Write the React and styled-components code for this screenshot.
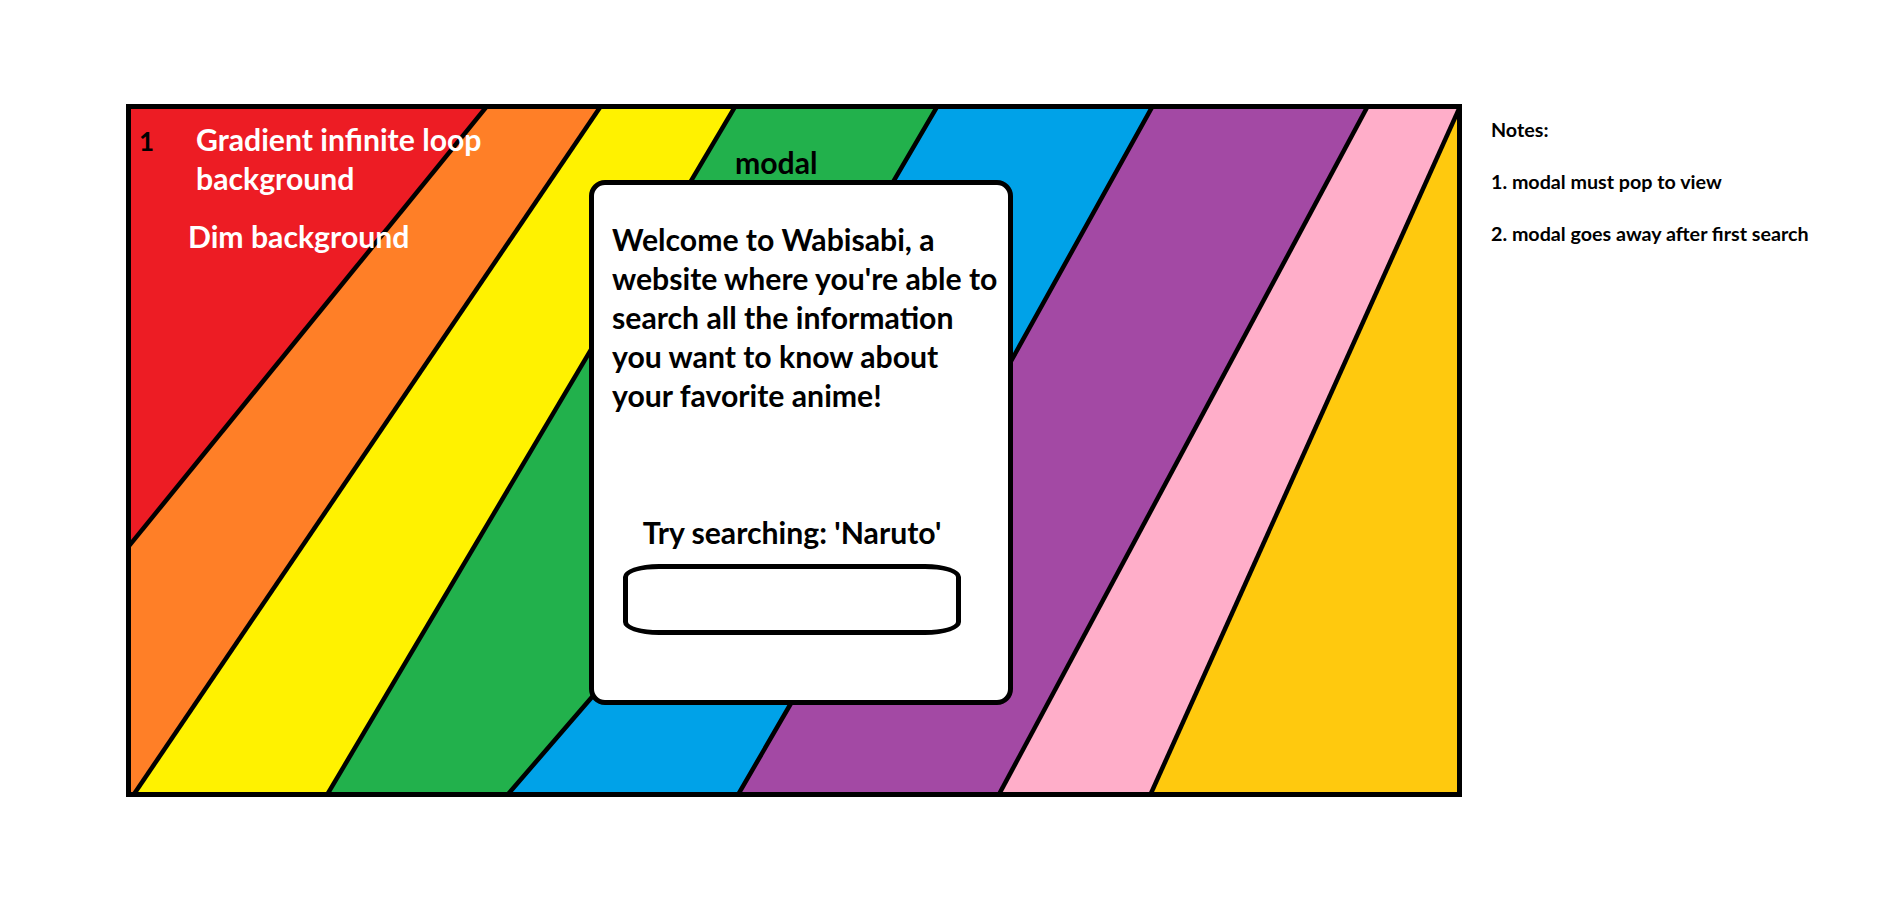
import React from "react";
import styled, { createGlobalStyle } from "styled-components";

const GlobalStyle = createGlobalStyle`
  html, body { margin: 0; padding: 0; background: #ffffff; }
  body { font-family: Lato, "Open Sans", "Liberation Sans", sans-serif; }
  * { box-sizing: border-box; }
`;

const Page = styled.div`
  display: flex;
  align-items: flex-start;
  gap: 29px;
  padding: 104px 0 0 126px;
  width: 1883px;
  height: 904px;
  overflow: hidden;
`;

const Frame = styled.div`
  flex-shrink: 0;
  width: 1336px;
  height: 693px;
  border: 5px solid #000;
  display: grid;
  overflow: hidden;
`;

const Stripes = styled.svg`
  grid-area: 1 / 1;
  display: block;
  width: 1326px;
  height: 683px;
`;

const Content = styled.div`
  grid-area: 1 / 1;
  position: relative;
  z-index: 1;
  display: grid;
  grid-template-columns: 458px 424px;
  align-items: start;
`;

const LabelArea = styled.div`
  display: flex;
  flex-direction: column;
  padding: 11px 0 0 8px;
`;

const Row = styled.div`
  display: flex;
  align-items: flex-start;
`;

const Text = styled.div`
  font-weight: 700;
  font-size: ${(p) => p.$size || 30.2}px;
  line-height: ${(p) => p.$lh || 39}px;
  color: ${(p) => (p.$light ? "#ffffff" : "#000000")};
  white-space: nowrap;
`;

const StepNumber = styled(Text)`
  width: 57px;
  padding-top: 2px;
`;

const DimLabel = styled(Text)`
  margin: 19px 0 0 49px;
`;

const ModalColumn = styled.div`
  display: flex;
  flex-direction: column;
  padding-top: 36px;
`;

const ModalTag = styled(Text)`
  margin-left: 146px;
`;

const Modal = styled.div`
  margin-top: 1px;
  width: 424px;
  height: 525px;
  background: #ffffff;
  border: 5px solid #000;
  border-radius: 16px;
  padding: 35px 18px 0 18px;
  display: flex;
  flex-direction: column;
`;

const Welcome = styled(Text)``;

const SearchArea = styled.div`
  margin-top: 98px;
  padding-right: 18px;
  display: flex;
  flex-direction: column;
  align-items: center;
`;

const SearchInput = styled.input`
  margin-top: 12px;
  width: 338px;
  height: 71px;
  border: 5px solid #000;
  border-radius: 36px / 13px;
  background: #ffffff;
  outline: none;
  font: 700 24px Lato, sans-serif;
  padding: 0 24px;
`;

const Notes = styled.div`
  display: flex;
  flex-direction: column;
`;

const LINES = [
  { fill: "#ED1C24", pts: [[492, 100], [120, 557]] },
  { fill: "#FF7F27", pts: [[605, 100], [130, 800]] },
  { fill: "#FFF200", pts: [[739, 100], [324, 800]] },
  { fill: "#22B14C", pts: [[941, 100], [592, 697], [503, 800]] },
  { fill: "#00A2E8", pts: [[1156, 100], [1010, 363], [790, 705], [735, 800]] },
  { fill: "#A349A4", pts: [[1371, 100], [996, 800]] },
  { fill: "#FFAEC9", pts: [[1463, 100], [1148, 800]] },
];

const toStr = (pts) => pts.map((p) => p.join(",")).join(" ");

function RainbowStripes() {
  const painted = [...LINES].reverse();
  return (
    <Stripes viewBox="131 109 1326 683" preserveAspectRatio="none">
      <rect x="100" y="100" width="1400" height="720" fill="#FFC90E" />
      {painted.map((l, i) => {
        const last = l.pts[l.pts.length - 1];
        const poly = [[100, 100], ...l.pts, [100, last[1]]];
        return <polygon key={"f" + i} points={toStr(poly)} fill={l.fill} />;
      })}
      {LINES.map((l, i) => (
        <polyline
          key={"s" + i}
          points={toStr(l.pts)}
          fill="none"
          stroke="#000"
          strokeWidth="4.5"
          strokeLinejoin="round"
        />
      ))}
    </Stripes>
  );
}

export default function App() {
  return (
    <>
      <GlobalStyle />
      <Page>
        <Frame>
          <RainbowStripes />
          <Content>
            <LabelArea>
              <Row>
                <StepNumber $size={26}>1</StepNumber>
                <Text $light>
                  Gradient infinite loop
                  <br />
                  background
                </Text>
              </Row>
              <DimLabel $light>Dim background</DimLabel>
            </LabelArea>
            <ModalColumn>
              <ModalTag $lh={34}>modal</ModalTag>
              <Modal>
                <Welcome>
                  Welcome to Wabisabi, a
                  <br />
                  website where you're able to
                  <br />
                  search all the information
                  <br />
                  you want to know about
                  <br />
                  your favorite anime!
                </Welcome>
                <SearchArea>
                  <Text>Try searching: 'Naruto'</Text>
                  <SearchInput type="text" aria-label="Search anime" />
                </SearchArea>
              </Modal>
            </ModalColumn>
          </Content>
        </Frame>
        <Notes>
          <Text $size={19.7} $lh={52}>Notes:</Text>
          <Text $size={19.7} $lh={52}>1. modal must pop to view</Text>
          <Text $size={19.7} $lh={52}>2. modal goes away after first search</Text>
        </Notes>
      </Page>
    </>
  );
}
